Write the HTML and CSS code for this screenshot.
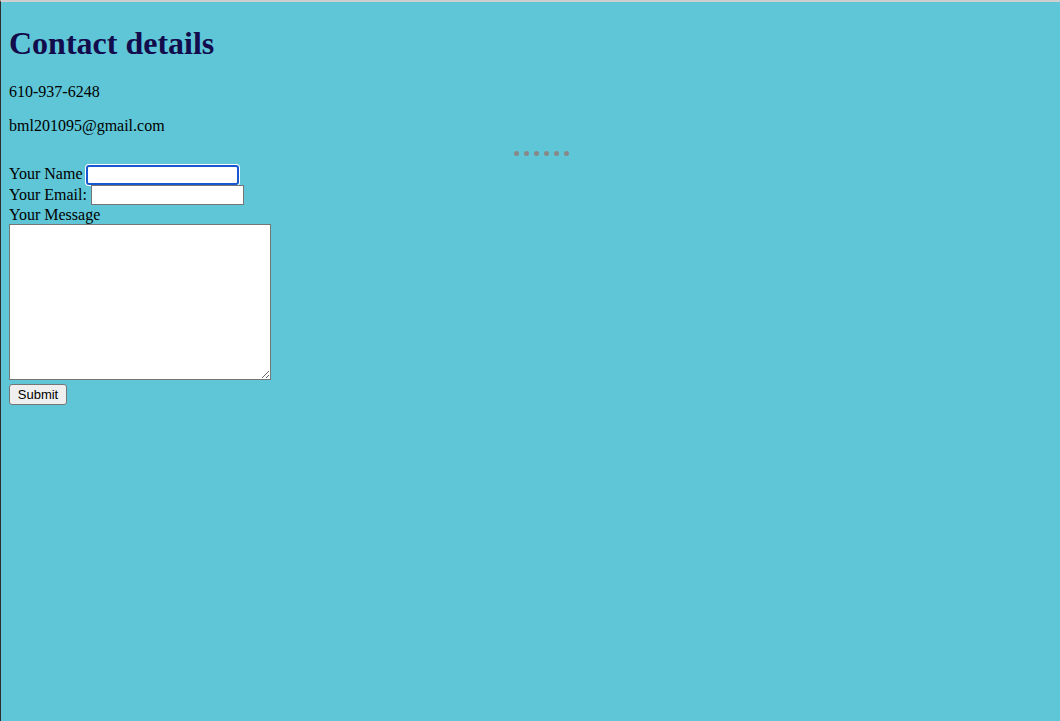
FILE: index.html
```html
<!DOCTYPE html>
<html lang="en">
<head>
<meta charset="utf-8">
<title>Contact</title>
<link rel="stylesheet" href="styles.css">
</head>
<body>
<h1 class="title">Contact details</h1>
<p class="info">610-937-6248</p>
<p class="info">bml201095@gmail.com</p>
<div class="dots"><span></span><span></span><span></span><span></span><span></span><span></span></div>
<form class="contact">
<label class="field">Your Name <input class="text-input is-focused" type="text"></label><br>
<label class="field">Your Email: <input class="text-input" type="email"></label><br>
<label class="field">Your Message</label><br>
<textarea class="message"></textarea><br>
<button class="submit" type="button">Submit</button>
</form>
</body>
</html>
```
FILE: styles.css
```css
html {
  background: #5ec6d6;
  border-top: 2px solid #cfcfcf;
  border-left: 1px solid #2e2e2e;
  min-height: 100%;
  box-sizing: border-box;
}
body {
  margin: 8px;
  font-family: "Liberation Serif", "Times New Roman", serif;
  font-size: 16px;
  color: #000;
}
.title {
  font-size: 32px;
  font-weight: bold;
  color: #120b4c;
  margin: 15px 0 21px;
}
.info {
  margin: 16px 0;
}
.dots {
  display: flex;
  justify-content: center;
  gap: 5px;
  height: 13px;
  padding-left: 22px;
  box-sizing: border-box;
}
.dots span {
  width: 5px;
  height: 5px;
  border-radius: 50%;
  background: #888888;
}
.contact {
  line-height: 19px;
}
.text-input {
  box-sizing: border-box;
  width: 153px;
  height: 20px;
  border: 1px solid #767676;
  background: #fff;
  padding: 1px 2px;
  margin: 0;
  font: 13px "Liberation Sans", Arial, sans-serif;
  vertical-align: baseline;
}
.is-focused {
  border: 2px solid #1758d0;
  border-radius: 3px;
  box-shadow: 0 0 0 1px #fff;
  outline: none;
}
.message {
  box-sizing: border-box;
  width: 262px;
  height: 156px;
  margin: 0;
  border: 1px solid #767676;
  background: #fff;
  vertical-align: bottom;
  display: inline-block;
}
.submit {
  margin-top: 4px;
  box-sizing: border-box;
  width: 58px;
  height: 21px;
  padding: 0;
  font: 13px "Liberation Sans", Arial, sans-serif;
  color: #000;
  background: #efefef;
  border: 1px solid #767676;
  border-radius: 3px;
}
```
